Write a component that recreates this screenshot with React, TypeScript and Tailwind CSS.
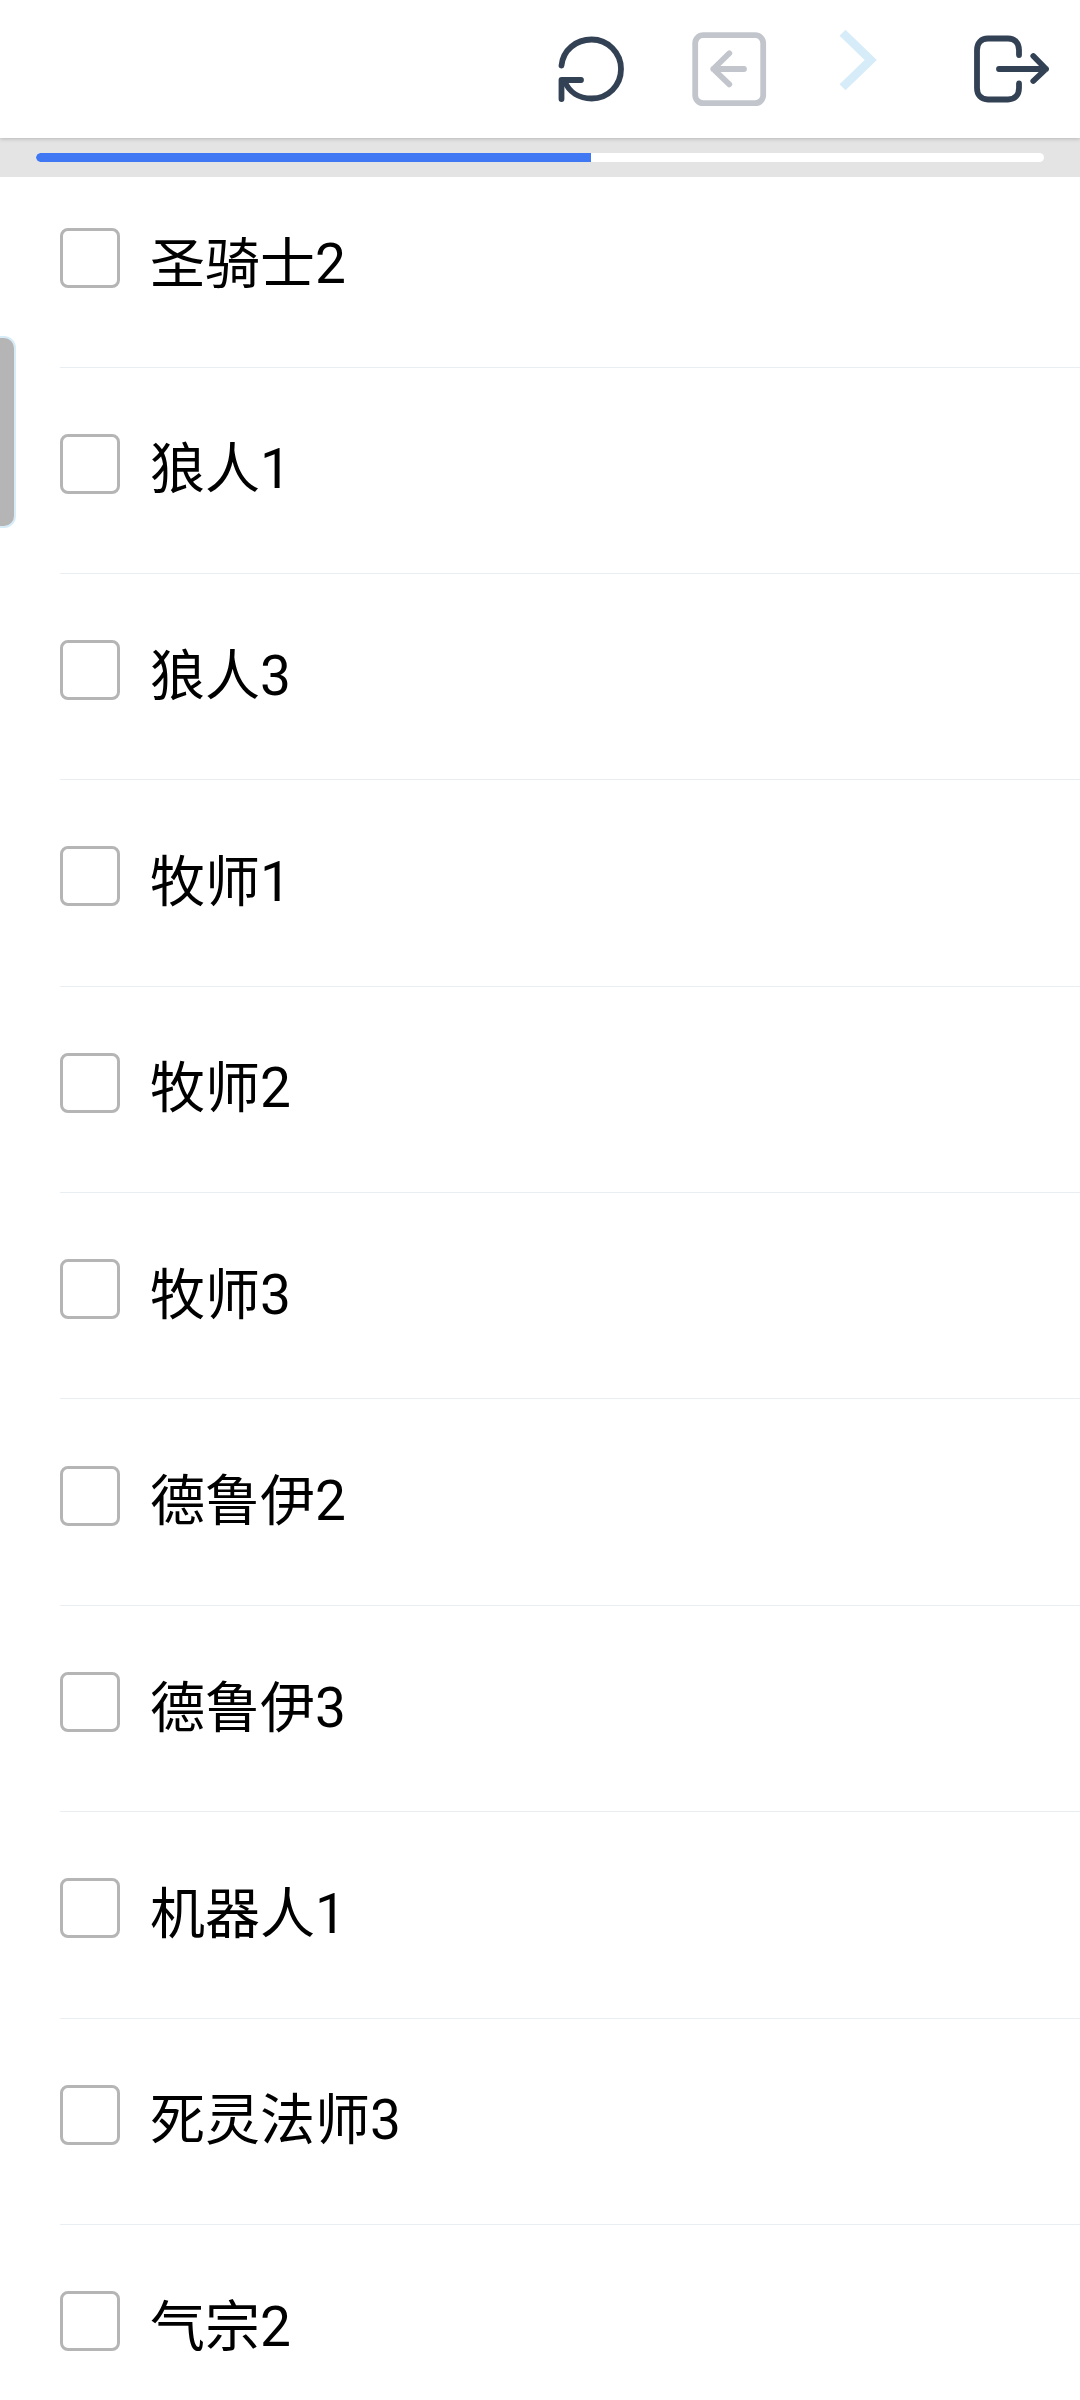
const names = ["圣骑士2", "狼人1", "狼人3", "牧师1", "牧师2", "牧师3", "德鲁伊2", "德鲁伊3", "机器人1", "死灵法师3", "气宗2"]

export default function App() {
  return (
    <div className="relative h-[2400px] w-[1080px] overflow-hidden bg-white font-['Roboto','Noto_Sans_CJK_SC',sans-serif] text-black">
      {/* top toolbar */}
      <div className="relative z-10 flex h-[138px] items-center justify-end bg-white pr-[30px] shadow-[0_1px_4px_rgba(0,0,0,0.2)]">
        <svg className="mr-[63px] h-[72px] w-[72px]" viewBox="0 0 72 72" fill="none" stroke="#334155" strokeWidth="5.8" strokeLinecap="round" strokeLinejoin="round">
          <path d="M6.5 32.5C8 17 21 6.5 36.7 6.5C53 6.5 66 20 66 36C66 52.5 53 65.5 36.7 65.5C24 65.5 14 59 9.5 48" />
          <path d="M6.5 66V47H26" />
        </svg>
        <svg className="mr-[68px] h-[78px] w-[78px]" viewBox="0 0 78 78" fill="none" stroke="#c2c6cc" strokeWidth="5.8" strokeLinecap="round" strokeLinejoin="round">
          <rect x="5.2" y="5.2" width="68" height="68" rx="8" />
          <path d="M39.3 23.3L23.3 39L39.3 54.3M23.3 39H54" />
        </svg>
        <svg className="mr-[90px] mb-[18px] h-[64px] w-[44px]" viewBox="0 0 44 64" fill="none" stroke="#d6ecf8" strokeWidth="8.5">
          <path d="M6.5 4.7L34.7 32L6.5 59.3" />
        </svg>
        <svg className="h-[72px] w-[80px]" viewBox="0 0 80 72" fill="none" stroke="#334155" strokeWidth="5.8" strokeLinecap="round" strokeLinejoin="round">
          <path d="M49 22V17C49 10 45 5.5 38 5.5H18C11 5.5 7 10 7 17V55C7 62 11 66.5 18 66.5H38C45 66.5 49 62 49 55V50.5" />
          <path d="M29 36H76M63.3 23L76 36L63.3 48" />
        </svg>
      </div>

      {/* progress */}
      <div className="flex h-[39px] items-center bg-[#e4e4e4] px-[36px]">
        <div className="h-[9px] w-[1008px] overflow-hidden rounded-full bg-white">
          <div className="h-full w-[555px] rounded-l-full bg-[#3f78f2]" />
        </div>
      </div>

      {/* side handle */}
      <div className="absolute top-[336px] left-0 h-[192px] w-[16px] rounded-r-[12px] border-2 border-l-0 border-[#d6ecf8] bg-[#b5b5b5]" />

      {/* list */}
      <div className="pl-[60px]">
        {names.map((name) => (
          <div key={name} className="flex h-[206.4px] items-center border-b border-[#e8eef2] pb-[13px] first:h-[190.5px] first:pb-[27px]">
            <div className="h-[60px] w-[60px] shrink-0 rounded-[8px] border-[3px] border-[#b5b5b5]" />
            <span className="mt-[12px] ml-[30px] text-[55px] leading-none">{name}</span>
          </div>
        ))}
      </div>
    </div>
  )
}
